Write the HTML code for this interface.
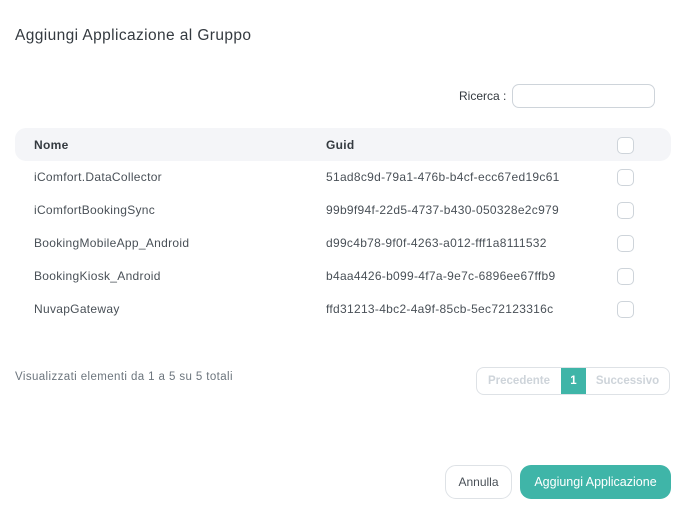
<!DOCTYPE html>
<html><head><meta charset="utf-8"><style>
*{box-sizing:border-box;margin:0;padding:0}
body{width:687px;height:514px;background:#fff;font-family:"Liberation Sans",sans-serif;position:relative;overflow:hidden;color:#495057}
.a{position:absolute}
.t{font-size:12px;color:#495057;white-space:nowrap;letter-spacing:0.3px}
.cb{position:absolute;left:617px;width:17px;height:17px;border:1px solid #ced4da;border-radius:5px;background:#fff}
</style></head><body>
<div class="a" style="left:15px;top:27px;font-size:15.5px;letter-spacing:0.4px;color:#343a40">Aggiungi Applicazione al Gruppo</div>
<div class="a t" style="left:459px;top:89px;color:#343a40;letter-spacing:0">Ricerca :</div>
<div class="a" style="left:512px;top:84px;width:143px;height:24px;border:1px solid #ced4da;border-radius:7px"></div>
<div class="a" style="left:15px;top:128px;width:656px;height:33px;background:#f4f5f8;border-radius:11px"></div>
<div class="a t" style="left:34px;top:138px;font-weight:bold;color:#343a40">Nome</div>
<div class="a t" style="left:326px;top:138px;font-weight:bold;color:#343a40">Guid</div>
<div class="cb" style="top:137px"></div>
<div class="a t" style="left:34px;top:170px">iComfort.DataCollector</div>
<div class="a t" style="left:326px;top:170px">51ad8c9d-79a1-476b-b4cf-ecc67ed19c61</div>
<div class="cb" style="top:169px"></div>
<div class="a t" style="left:34px;top:203px">iComfortBookingSync</div>
<div class="a t" style="left:326px;top:203px">99b9f94f-22d5-4737-b430-050328e2c979</div>
<div class="cb" style="top:202px"></div>
<div class="a t" style="left:34px;top:236px">BookingMobileApp_Android</div>
<div class="a t" style="left:326px;top:236px">d99c4b78-9f0f-4263-a012-fff1a8111532</div>
<div class="cb" style="top:235px"></div>
<div class="a t" style="left:34px;top:269px">BookingKiosk_Android</div>
<div class="a t" style="left:326px;top:269px">b4aa4426-b099-4f7a-9e7c-6896ee67ffb9</div>
<div class="cb" style="top:268px"></div>
<div class="a t" style="left:34px;top:302px">NuvapGateway</div>
<div class="a t" style="left:326px;top:302px">ffd31213-4bc2-4a9f-85cb-5ec72123316c</div>
<div class="cb" style="top:301px"></div>
<div class="a t" style="left:15px;top:371px;font-size:11.5px;letter-spacing:0.4px;color:#6c757d">Visualizzati elementi da 1 a 5 su 5 totali</div>
<div class="a" style="left:476px;top:367px;width:194px;height:28px;border:1px solid #dee2e6;border-radius:8px;overflow:hidden;display:flex;font-size:11.5px;font-weight:bold;color:#ced4da">
<div style="width:84px;line-height:26px;text-align:center">Precedente</div>
<div style="width:25px;line-height:26px;text-align:center;background:#3fb5a8;color:#fff">1</div>
<div style="flex:1;line-height:26px;text-align:center">Successivo</div>
</div>
<div class="a" style="left:445px;top:465px;width:67px;height:34px;border:1px solid #dee2e6;border-radius:11px;font-size:12px;line-height:32px;text-align:center;color:#495057">Annulla</div>
<div class="a" style="left:520px;top:465px;width:151px;height:34px;background:#3fb5a8;border-radius:11px;font-size:12.5px;line-height:34px;text-align:center;color:#fff">Aggiungi Applicazione</div>
</body></html>
